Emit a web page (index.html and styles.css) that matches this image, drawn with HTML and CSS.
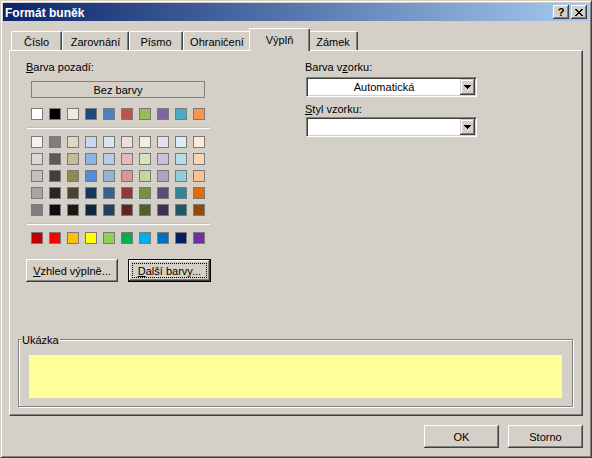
FILE: index.html
```html
<!DOCTYPE html>
<html lang="cs">
<head>
<meta charset="utf-8">
<title>Formát buněk</title>
<link rel="stylesheet" href="styles.css">
</head>
<body>
<div class="window">
  <div class="titlebar">
    <span class="title">Formát buněk</span>
    <div class="tbtns">
      <span class="tbtn help">?</span>
      <span class="tbtn"><svg width="8" height="7" viewBox="0 0 8 7" shape-rendering="crispEdges"><path d="M0 0h2v1h1v1h2v-1h1v-1h2v1h-1v1h-1v1h-1v1h1v1h1v1h1v1h-2v-1h-1v-1h-2v1h-1v1h-2v-1h1v-1h1v-1h1v-1h-1v-1h-1v-1h-1z" fill="#000"/></svg></span>
    </div>
  </div>
  <div class="content">
    <div class="tabs">
      <div class="tab t1">Číslo</div>
      <div class="tab t2">Zarovnání</div>
      <div class="tab t3">Písmo</div>
      <div class="tab t4">Ohraničení</div>
      <div class="tab t5 active">Výplň</div>
      <div class="tab t6">Zámek</div>
    </div>
    <div class="panel">
      <div class="top">
        <div class="left">
          <div class="label"><u>B</u>arva pozadí:</div>
          <div class="none">Bez barvy</div>
          <div class="row row1">
            <span class="sw" style="background:#FFFFFF"></span>
            <span class="sw" style="background:#000000"></span>
            <span class="sw" style="background:#EEECE1"></span>
            <span class="sw" style="background:#1F497D"></span>
            <span class="sw" style="background:#4F81BD"></span>
            <span class="sw" style="background:#C0504D"></span>
            <span class="sw" style="background:#9BBB59"></span>
            <span class="sw" style="background:#8064A2"></span>
            <span class="sw" style="background:#4BACC6"></span>
            <span class="sw" style="background:#F79646"></span>
          </div>
          <div class="sep"></div>
          <div class="grid">
            <div class="row">
              <span class="sw" style="background:#F2F2F2"></span>
              <span class="sw" style="background:#7F7F7F"></span>
              <span class="sw" style="background:#DDD9C3"></span>
              <span class="sw" style="background:#C6D9F0"></span>
              <span class="sw" style="background:#DBE5F1"></span>
              <span class="sw" style="background:#F2DCDB"></span>
              <span class="sw" style="background:#EBF1DD"></span>
              <span class="sw" style="background:#E5E0EC"></span>
              <span class="sw" style="background:#DBEEF3"></span>
              <span class="sw" style="background:#FDEADA"></span>
            </div>
            <div class="row">
              <span class="sw" style="background:#D8D8D8"></span>
              <span class="sw" style="background:#595959"></span>
              <span class="sw" style="background:#C4BD97"></span>
              <span class="sw" style="background:#8DB3E2"></span>
              <span class="sw" style="background:#B8CCE4"></span>
              <span class="sw" style="background:#E5B9B7"></span>
              <span class="sw" style="background:#D7E3BC"></span>
              <span class="sw" style="background:#CCC1D9"></span>
              <span class="sw" style="background:#B7DDE8"></span>
              <span class="sw" style="background:#FBD5B5"></span>
            </div>
            <div class="row">
              <span class="sw" style="background:#BFBFBF"></span>
              <span class="sw" style="background:#3F3F3F"></span>
              <span class="sw" style="background:#938953"></span>
              <span class="sw" style="background:#548DD4"></span>
              <span class="sw" style="background:#95B3D7"></span>
              <span class="sw" style="background:#D99694"></span>
              <span class="sw" style="background:#C3D69B"></span>
              <span class="sw" style="background:#B2A2C7"></span>
              <span class="sw" style="background:#92CDDC"></span>
              <span class="sw" style="background:#FAC08F"></span>
            </div>
            <div class="row">
              <span class="sw" style="background:#A5A5A5"></span>
              <span class="sw" style="background:#262626"></span>
              <span class="sw" style="background:#494429"></span>
              <span class="sw" style="background:#17365D"></span>
              <span class="sw" style="background:#366092"></span>
              <span class="sw" style="background:#953734"></span>
              <span class="sw" style="background:#76923C"></span>
              <span class="sw" style="background:#5F497A"></span>
              <span class="sw" style="background:#31859B"></span>
              <span class="sw" style="background:#E36C09"></span>
            </div>
            <div class="row">
              <span class="sw" style="background:#7F7F7F"></span>
              <span class="sw" style="background:#0C0C0C"></span>
              <span class="sw" style="background:#1D1B10"></span>
              <span class="sw" style="background:#0F243E"></span>
              <span class="sw" style="background:#244061"></span>
              <span class="sw" style="background:#632423"></span>
              <span class="sw" style="background:#4F6128"></span>
              <span class="sw" style="background:#3F3151"></span>
              <span class="sw" style="background:#205867"></span>
              <span class="sw" style="background:#974806"></span>
            </div>
          </div>
          <div class="sep"></div>
          <div class="row row-std">
            <span class="sw" style="background:#C00000"></span>
            <span class="sw" style="background:#FF0000"></span>
            <span class="sw" style="background:#FFC000"></span>
            <span class="sw" style="background:#FFFF00"></span>
            <span class="sw" style="background:#92D050"></span>
            <span class="sw" style="background:#00B050"></span>
            <span class="sw" style="background:#00B0F0"></span>
            <span class="sw" style="background:#0070C0"></span>
            <span class="sw" style="background:#002060"></span>
            <span class="sw" style="background:#7030A0"></span>
          </div>
          <div class="btns">
            <div class="btn btn-fill"><span><u>V</u>zhled výplně...</span></div>
            <div class="btn btn-more default"><span class="focus"><u>D</u>alší barvy...</span></div>
          </div>
        </div>
        <div class="right">
          <div class="label">Barva v<u>z</u>orku:</div>
          <div class="combo">
            <span class="combo-text">Automatická</span>
            <span class="combo-btn"><svg width="7" height="4" viewBox="0 0 7 4" shape-rendering="crispEdges"><path d="M0 0h7v1h-1v1h-1v1h-1v1h-1v-1h-1v-1h-1v-1h-1z" fill="#000"/></svg></span>
          </div>
          <div class="label label2"><u>S</u>tyl vzorku:</div>
          <div class="combo combo2">
            <span class="combo-text"></span>
            <span class="combo-btn"><svg width="7" height="4" viewBox="0 0 7 4" shape-rendering="crispEdges"><path d="M0 0h7v1h-1v1h-1v1h-1v1h-1v-1h-1v-1h-1v-1h-1z" fill="#000"/></svg></span>
          </div>
        </div>
      </div>
      <div class="group">
        <span class="legend">Ukázka</span>
        <div class="sample"></div>
      </div>
    </div>
    <div class="footer">
      <div class="btn btn-dlg">OK</div>
      <div class="btn btn-dlg">Storno</div>
    </div>
  </div>
</div>
</body>
</html>
```
FILE: styles.css
```css
html, body {
  margin: 0;
  padding: 0;
  background: #D4D0C8;
}
body {
  font-family: "Liberation Sans", Arial, sans-serif;
  font-size: 11px;
  color: #000;
}
u { text-decoration: underline; text-underline-offset: 1px; }

.window {
  width: 592px;
  height: 458px;
  box-sizing: border-box;
  background: #D4D0C8;
  border: 1px solid;
  border-color: #D4D0C8 #404040 #404040 #D4D0C8;
  box-shadow: inset 1px 1px #fff, inset -1px -1px #808080;
  padding: 2px;
  display: flex;
  flex-direction: column;
}

.titlebar {
  height: 18px;
  flex: none;
  background: linear-gradient(to right, #0A246A, #A6CAF0);
  display: flex;
  align-items: center;
  justify-content: space-between;
  padding: 0 2px 0 2px;
}
.title {
  color: #fff;
  font-weight: bold;
  font-size: 12px;
  line-height: 14px;
  padding-top: 1px;
}
.tbtns { display: flex; gap: 2px; }
.tbtn {
  width: 16px;
  height: 14px;
  box-sizing: border-box;
  background: #D4D0C8;
  box-shadow: inset -1px -1px #404040, inset 1px 1px #fff, inset -2px -2px #808080;
  display: flex;
  align-items: center;
  justify-content: center;
}
.help {
  font-weight: bold;
  font-size: 11px;
  line-height: 12px;
}

.content {
  flex: 1;
  padding: 7px 6px 0;
  display: flex;
  flex-direction: column;
}

.tabs {
  display: flex;
  align-items: flex-end;
  height: 22px;
  padding-left: 2px;
}
.tab {
  height: 19px;
  box-sizing: border-box;
  border-top: 1px solid #fff;
  border-left: 1px solid #fff;
  border-right: 1px solid #404040;
  box-shadow: inset -1px 0 #808080;
  border-radius: 2px 2px 0 0;
  display: flex;
  align-items: center;
  justify-content: center;
  padding-top: 2px;
  background: #D4D0C8;
}
.t1 { width: 51px; }
.t2 { width: 67px; }
.t3 { width: 54px; }
.t4 { width: 68px; }
.t5 { width: 61px; }
.t6 { width: 50px; }
.tab.active {
  height: 23px;
  margin: 0 -2px -1px;
  position: relative;
  z-index: 1;
  padding-top: 0;
}

.panel {
  height: 366px;
  box-sizing: border-box;
  border: 1px solid;
  border-color: #fff #404040 #404040 #fff;
  box-shadow: inset -1px -1px #808080;
  padding-top: 10px;
}
.top { display: flex; }
.left {
  margin-left: 16px;
  width: 186px;
  display: flex;
  flex-direction: column;
  align-items: flex-start;
}
.label { line-height: 13px; height: 13px; white-space: nowrap; }
.none {
  margin: 7px 0 0 5px;
  width: 174px;
  height: 17px;
  box-sizing: border-box;
  border: 1px solid #808080;
  display: flex;
  align-items: center;
  justify-content: center;
}
.row { display: flex; gap: 6px; margin-left: 5px; }
.row1 { margin-top: 10px; }
.sw {
  width: 12px;
  height: 12px;
  box-sizing: border-box;
  border: 1px solid #7A7A7A;
  flex: none;
}
.sep {
  margin: 7px 0 0 1px;
  width: 183px;
  height: 2px;
  box-sizing: border-box;
  border-top: 1px solid #A6C4EC;
  border-bottom: 1px solid #fff;
}
.grid {
  margin-top: 7px;
  display: flex;
  flex-direction: column;
  gap: 5px;
}
.row-std { margin-top: 7px; }
.btns {
  margin-top: 15px;
  display: flex;
  gap: 10px;
}
.btn {
  height: 23px;
  box-sizing: border-box;
  background: #D4D0C8;
  box-shadow: inset -1px -1px #404040, inset 1px 1px #fff, inset -2px -2px #808080;
  display: flex;
  align-items: center;
  justify-content: center;
  white-space: nowrap;
}
.btn-fill { width: 92px; }
.btn-more { width: 83px; }
.btn.default {
  border: 1px solid #000;
  align-items: stretch;
}
.focus {
  flex: 1;
  margin: 3px;
  border: 1px dotted #000;
  display: flex;
  align-items: center;
  justify-content: center;
}

.right {
  margin-left: 93px;
  width: 172px;
  display: flex;
  flex-direction: column;
}
.combo {
  margin: 3px 0 0 1px;
  width: 171px;
  height: 20px;
  box-sizing: border-box;
  border: 1px solid;
  border-color: #808080 #fff #fff #808080;
  box-shadow: inset 1px 1px #404040, inset -1px -1px #D4D0C8;
  background: #fff;
  padding: 1px;
  display: flex;
}
.combo-text {
  flex: 1;
  display: flex;
  align-items: center;
  justify-content: center;
}
.combo-btn {
  width: 15px;
  height: 16px;
  flex: none;
  box-sizing: border-box;
  background: #D4D0C8;
  box-shadow: inset -1px -1px #404040, inset 1px 1px #D4D0C8, inset -2px -2px #808080, inset 2px 2px #fff;
  display: flex;
  align-items: center;
  justify-content: center;
}
.label2 { margin-top: 6px; }
.combo2 { margin-top: 1px; }

.group {
  position: relative;
  margin: 57px 0 0 8px;
  width: 555px;
  height: 68px;
  box-sizing: border-box;
  border: 1px solid #808080;
  box-shadow: inset 1px 1px #fff, 1px 1px #fff;
}
.legend {
  position: absolute;
  left: 2px;
  top: -6px;
  padding: 0 1px;
  line-height: 13px;
  background: #D4D0C8;
}
.sample {
  margin: 15px 0 0 10px;
  width: 533px;
  height: 43px;
  background: #FFFF99;
}

.footer {
  margin-top: 9px;
  display: flex;
  justify-content: flex-end;
  gap: 9px;
}
.btn-dlg { width: 75px; }
```
